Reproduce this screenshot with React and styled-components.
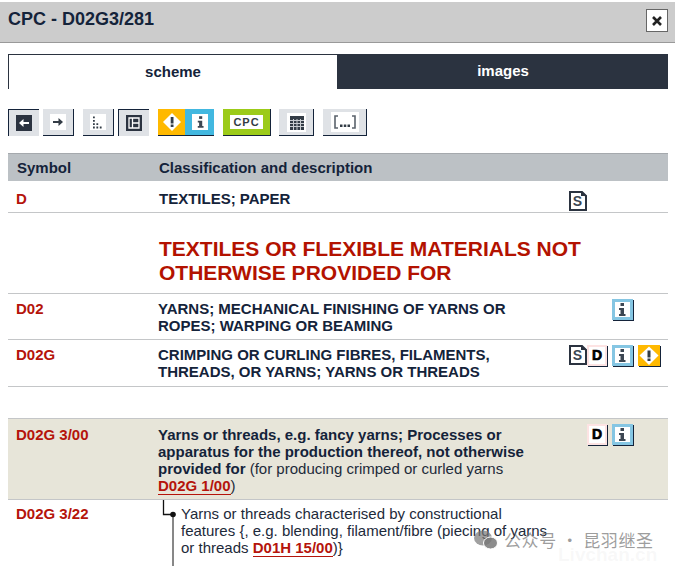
import React from 'react'
import styled, { createGlobalStyle } from 'styled-components'

const Global = createGlobalStyle`
  html, body { margin: 0; padding: 0; background: #fff; height: 566px; overflow: hidden; }
  body { font-family: "Liberation Sans", Arial, sans-serif; color: #1d2a3a; }
`

const Dialog = styled.div`
  position: relative;
  width: 675px;
  height: 566px;
  overflow: hidden;
  padding-top: 2px;
  box-sizing: border-box;
`

const Header = styled.header`
  box-sizing: border-box;
  height: 41px;
  background: #cccccc;
  border-bottom: 1px solid #999;
  display: flex;
  align-items: flex-start;
  justify-content: space-between;
  padding: 7px 7px 0 8px;
`

const Title = styled.h1`
  margin: 0;
  font-size: 18px;
  line-height: 20px;
  font-weight: 700;
  color: #14233a;
`

const CloseButton = styled.button`
  width: 22px;
  height: 23px;
  padding: 0;
  background: #fff;
  border: 1px solid #666;
  display: flex;
  align-items: center;
  justify-content: center;
`

const Body = styled.main`
  padding: 11px 7px 0 8px;
`

const Tabs = styled.div`
  display: grid;
  grid-template-columns: 330px 330px;
  height: 35px;
`

const Tab = styled.div`
  box-sizing: border-box;
  display: flex;
  align-items: center;
  justify-content: center;
  font-size: 15px;
  font-weight: 700;
  padding-bottom: 2px;
  color: ${p => (p.$active ? '#14233a' : '#fff')};
  background: ${p => (p.$active ? '#fff' : '#2b3340')};
  border: 1px solid #2b3340;
  border-bottom: ${p => (p.$active ? 'none' : '1px solid #2b3340')};
`

const Toolbar = styled.div`
  display: flex;
  margin-top: 20px;
  height: 27px;
`

const ToolButton = styled.div`
  box-sizing: border-box;
  width: ${p => p.$w || 31}px;
  height: 27px;
  margin-left: ${p => p.$gap || 0}px;
  background: ${p => p.$bg || '#dfe2e6'};
  display: flex;
  align-items: center;
  justify-content: center;
  border-style: solid;
  border-color: #14233a;
  border-width: ${p => (p.$pressed ? '1px 0 0 1px' : '0 1px 1px 0')};
`

const SplitButton = styled.div`
  box-sizing: border-box;
  width: 56px;
  height: 27px;
  margin-left: 9px;
  display: grid;
  grid-template-columns: 27px 1fr;
  border-bottom: 1px solid #14233a;
`

const SplitPart = styled.div`
  background: ${p => p.$bg};
  display: flex;
  align-items: center;
  justify-content: center;
`

const CpcLabel = styled.div`
  width: 33px;
  height: 14px;
  background: #fff;
  color: #333c46;
  font-size: 11px;
  font-weight: 700;
  letter-spacing: 1px;
  line-height: 14px;
  text-align: center;
`

const TableHead = styled.div`
  margin-top: 17px;
  height: 27px;
  background: #bcc1c5;
  border-top: 1px solid #a5a9ad;
  display: grid;
  grid-template-columns: 142px 1fr;
  align-items: center;
  font-size: 15px;
  font-weight: 700;
  color: #14233a;
  padding-left: 9px;
`

const Row = styled.div`
  display: grid;
  grid-template-columns: ${p => p.$col || 142}px 1fr auto;
  box-sizing: border-box;
  height: ${p => p.$h}px;
  padding-left: 8px;
  padding-top: ${p => p.$top || 6}px;
  border-bottom: 1px solid #c4c6c8;
  background: ${p => p.$bg || 'transparent'};
  font-size: 15px;
  line-height: 17px;
`

const Symbol = styled.div`
  font-weight: 700;
  color: #b5140b;
`

const Upper = styled.div`
  font-weight: 700;
  color: #14233a;
  width: 390px;
`

const Description = styled.div`
  width: 390px;
`

const Bold = styled.b`
  color: #14233a;
`

const Plain = styled.span`
  color: #1d2a3a;
`

const Ref = styled.span`
  font-weight: 700;
  color: #b5140b;
  white-space: nowrap;
  border-bottom: 1px solid #b5140b;
`

const BigTitle = styled.div`
  box-sizing: border-box;
  height: 81px;
  padding: 24px 0 0 151px;
  font-size: 21px;
  line-height: 24px;
  font-weight: 700;
  color: #b31200;
  border-bottom: 1px solid #c4c6c8;
`

const Spacer = styled.div`
  height: 31px;
  border-bottom: 1px solid #c4c6c8;
`

const Icons = styled.div`
  display: flex;
  align-items: flex-start;
  justify-content: flex-end;
  gap: ${p => p.$gap || 0}px;
  padding-right: ${p => p.$right || 0}px;
  margin-top: ${p => p.$top ?? -1}px;
`

const IconGap = styled.span`
  width: 4px;
`

const TreeRow = styled.div`
  display: flex;
  padding: 5px 0 0 8px;
  font-size: 15px;
  line-height: 17px;
`

const TreeSymbol = styled(Symbol)`
  width: 146px;
`

const TreeText = styled.div`
  width: 372px;
  color: #1d2a3a;
`

const TreeLine = styled.svg`
  flex: none;
  width: 19px;
  height: 66px;
  margin-top: -5px;
`

const Watermark = styled.div`
  position: absolute;
  left: 474px;
  top: 527px;
  display: flex;
  align-items: center;
  gap: 6px;
  font-family: "Noto Sans CJK SC", sans-serif;
  font-size: 17px;
  letter-spacing: 0.6px;
  color: rgba(120, 120, 120, 0.72);
`

const WatermarkFaint = styled.div`
  position: absolute;
  left: 558px;
  top: 544px;
  font-size: 19px;
  font-weight: 700;
  color: rgba(190, 190, 190, 0.1);
`

const I = () => (
  <>
    <rect x="8" y="2.500" width="3.500" height="3" />
    <path d="M6.500 7.500h5v6h1.500v2H6.500v-2H8v-4H6.500z" />
  </>
)

const IconBox = ({ bg, children }) => (
  <svg width="22" height="22" viewBox="0 0 22 22">
    <rect width="21" height="21" fill={bg} />
    <rect x="3" y="3" width="15" height="15" fill="#fff" />
    <path d="M21 1h1v21H1v-1h20z" fill="#14233a" />
    {children}
  </svg>
)

const InfoIcon = () => (
  <IconBox bg="#85c6e3">
    <g fill="#3c4652" transform="translate(0.5 1.5)"><I /></g>
  </IconBox>
)

const WarnIcon = () => (
  <svg width="23" height="22" viewBox="0 0 23 22">
    <rect width="22" height="21" fill="#ffb900" />
    <path d="M22 1h1v21H1v-1h21z" fill="#14233a" />
    <path d="M11 1.500 20.500 10.500 11 20 1.500 10.500z" fill="#fff" />
    <rect x="9.500" y="5.500" width="3" height="7" fill="#333c46" />
    <rect x="9.500" y="13.500" width="3" height="2.500" fill="#333c46" />
  </svg>
)

const DIcon = () => (
  <svg width="21" height="22" viewBox="0 0 21 22">
    <rect width="20" height="21" fill="#fde3e3" />
    <rect x="2" y="2" width="16" height="17" fill="#fff" />
    <path d="M20 1h1v21H1v-1h19z" fill="#14233a" />
    <text x="10" y="15" textAnchor="middle" fontFamily="Liberation Sans" fontSize="14" fontWeight="700" stroke="#000" strokeWidth="0.7" fill="#000">D</text>
  </svg>
)

const SIcon = () => (
  <svg width="18" height="20" viewBox="0 0 18 20">
    <path d="M1 1h12l4 4v14H1z" fill="#fff" stroke="#2b3340" strokeWidth="2" />
    <path d="M12 0v5h6z" fill="#2b3340" />
    <text x="8.500" y="15" textAnchor="middle" fontFamily="Liberation Sans" fontSize="14" fontWeight="700" fill="#3c4652">S</text>
  </svg>
)

const App = () => (
  <Dialog>
    <Global />
    <Header>
      <Title>CPC - D02G3/281</Title>
      <CloseButton>
        <svg width="12" height="12" viewBox="0 0 12 12">
          <path d="M2 2l8 8M10 2l-8 8" stroke="#222" strokeWidth="2.600" />
        </svg>
      </CloseButton>
    </Header>
    <Body>
      <Tabs>
        <Tab $active>scheme</Tab>
        <Tab>images</Tab>
      </Tabs>
      <Toolbar>
        <ToolButton $pressed>
          <svg width="16" height="16" viewBox="0 0 16 16">
            <rect width="16" height="16" fill="#2b3340" />
            <path d="M3 8l4.500-4v3H13v2H7.500v3z" fill="#fff" />
          </svg>
        </ToolButton>
        <ToolButton $gap={4}>
          <svg width="16" height="16" viewBox="0 0 16 16">
            <rect width="16" height="16" fill="#fff" />
            <path d="M13 8L8.500 4v3H3v2h5.500v3z" fill="#333c46" />
          </svg>
        </ToolButton>
        <ToolButton $gap={9}>
          <svg width="16" height="16" viewBox="0 0 16 16">
            <rect width="16" height="16" fill="#fff" />
            <path d="M3 2.500h1.800v1.800H3zM3 6h1.800v1.800H3zM3 9.300h1.800v1.800H3zM6.400 9.300h1.800v1.800H6.400zM3 12.600h1.800v1.800H3zM6.400 12.600h1.800v1.800H6.400zM9.800 12.600h1.800v1.800H9.800z" fill="#333c46" />
          </svg>
        </ToolButton>
        <ToolButton $pressed $gap={4}>
          <svg width="16" height="16" viewBox="0 0 16 16">
            <rect width="16" height="16" fill="#2b3340" />
            <path d="M3 3h10v10H3zM6.500 3v10M6.500 8H13" fill="none" stroke="#fff" strokeWidth="1.300" />
          </svg>
        </ToolButton>
        <SplitButton>
          <SplitPart $bg="#ffb900">
            <svg width="18" height="18" viewBox="0 0 18 18">
              <path d="M9 0l9 9-9 9-9-9z" fill="#fff" />
              <rect x="7.700" y="4" width="2.800" height="6.500" fill="#333c46" />
              <rect x="7.700" y="11.500" width="2.800" height="2.500" fill="#333c46" />
            </svg>
          </SplitPart>
          <SplitPart $bg="#42b8e0">
            <svg width="16" height="18" viewBox="0 0 18 18">
              <rect width="18" height="18" fill="#fff" />
              <g fill="#3c4652"><I /></g>
            </svg>
          </SplitPart>
        </SplitButton>
        <ToolButton $gap={9} $w={48} $bg="#9ccb19">
          <CpcLabel>CPC</CpcLabel>
        </ToolButton>
        <ToolButton $gap={8} $w={35}>
          <svg width="19" height="19" viewBox="0 0 19 19">
            <rect width="19" height="19" fill="#fff" />
            <rect x="3" y="3" width="14" height="14" fill="#333c46" />
            <path d="M3 7.500h14M3 10.500h14M3 13.500h14M6.500 6v11M10 6v11M13.500 6v11" stroke="#c8ccd0" strokeWidth="1" />
          </svg>
        </ToolButton>
        <ToolButton $gap={9} $w={44}>
          <svg width="28" height="20" viewBox="0 0 28 20">
            <rect width="28" height="20" fill="#fff" />
            <path d="M7 4H4v12h3M21 4h3v12h-3" fill="none" stroke="#5b636c" strokeWidth="1.600" />
            <path d="M9 12.500h2.500V15H9zM12.800 12.500h2.500V15h-2.500zM16.500 12.500H19V15h-2.500z" fill="#333c46" />
          </svg>
        </ToolButton>
      </Toolbar>
      <TableHead>
        <span>Symbol</span>
        <span>Classification and description</span>
      </TableHead>
      <Row $h={32} $top={9} $col={143}>
        <Symbol>D</Symbol>
        <Upper>TEXTILES; PAPER</Upper>
        <Icons $right={81} $top={1}><SIcon /></Icons>
      </Row>
      <BigTitle>TEXTILES OR FLEXIBLE MATERIALS NOT<br />OTHERWISE PROVIDED FOR</BigTitle>
      <Row $h={46}>
        <Symbol>D02</Symbol>
        <Upper>YARNS; MECHANICAL FINISHING OF YARNS OR ROPES; WARPING OR BEAMING</Upper>
        <Icons $right={34}><InfoIcon /></Icons>
      </Row>
      <Row $h={47}>
        <Symbol>D02G</Symbol>
        <Upper>CRIMPING OR CURLING FIBRES, FILAMENTS, THREADS, OR YARNS; YARNS OR THREADS</Upper>
        <Icons $right={7}>
          <SIcon />
          <DIcon />
          <IconGap />
          <InfoIcon />
          <IconGap />
          <WarnIcon />
        </Icons>
      </Row>
      <Spacer />
      <Row $h={81} $top={7} $bg="#e7e5d9">
        <Symbol>D02G 3/00</Symbol>
        <Description>
          <Bold>Yarns or threads, e.g. fancy yarns; Processes or apparatus for the production thereof, not otherwise provided for</Bold>{' '}
          <Plain>(for producing crimped or curled yarns </Plain>
          <Ref>D02G 1/00</Ref>
          <Plain>)</Plain>
        </Description>
        <Icons $gap={4} $right={34} $top={-2}>
          <DIcon />
          <InfoIcon />
        </Icons>
      </Row>
      <TreeRow>
        <TreeSymbol>D02G 3/22</TreeSymbol>
        <TreeLine viewBox="0 0 19 66">
          <path d="M1.500 0v14.500H10" fill="none" stroke="#111" strokeWidth="1.300" />
          <circle cx="11" cy="14.500" r="2.800" fill="#111" />
          <path d="M11 14v52" stroke="#111" strokeWidth="1" />
        </TreeLine>
        <TreeText>
          Yarns or threads characterised by constructional features {'{'}, e.g. blending, filament/fibre (piecing of yarns or threads <Ref>D01H 15/00</Ref>){'}'}
        </TreeText>
      </TreeRow>
    </Body>
    <Watermark>
      <svg width="24" height="20" viewBox="0 0 24 20">
        <ellipse cx="9" cy="8" rx="9" ry="7.500" fill="rgba(120,120,120,0.7)" />
        <ellipse cx="16.500" cy="13" rx="7" ry="6" fill="rgba(120,120,120,0.85)" stroke="#fff" strokeWidth="1" />
      </svg>
      <span>公众号 · 昆羽继圣</span>
    </Watermark>
    <WatermarkFaint>Livchan.cn</WatermarkFaint>
  </Dialog>
)

export default App
